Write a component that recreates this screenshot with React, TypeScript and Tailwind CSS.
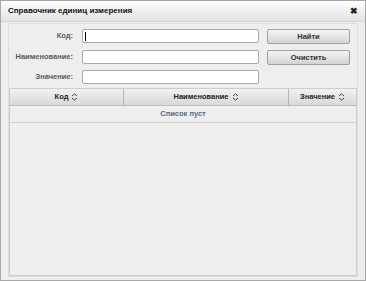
function SortIcon() {
  return (
    <svg width="7" height="8" viewBox="0 0 7 8" className="ml-[3px] inline-block">
      <path d="M1 3 L3.5 0.8 L6 3" fill="none" stroke="#444" strokeWidth="1" />
      <path d="M1 5 L3.5 7.2 L6 5" fill="none" stroke="#444" strokeWidth="1" />
    </svg>
  );
}

function Field({ label, cursor }: { label: string; cursor?: boolean }) {
  return (
    <div className="flex items-center h-[14px]">
      <div className="w-[64px] text-right text-[7.5px] font-bold text-[#5a5a5a]">{label}</div>
      <div className="ml-[9px] w-[177px] h-[14px] bg-white border border-[#a9a9a9] rounded-[2px] flex items-center pl-[2px]">
        {cursor && <div className="w-px h-[9px] bg-black" />}
      </div>
    </div>
  );
}

function Btn({ children }: { children: string }) {
  return (
    <button className="w-[83px] h-[15px] rounded-[2px] border border-[#a0a0a0] bg-gradient-to-b from-[#f4f4f4] to-[#d4d4d4] text-[7.5px] font-bold text-[#333] flex items-center justify-center">
      {children}
    </button>
  );
}

export default function App() {
  return (
    <div className="w-[366px] h-[281px] bg-[#a8a8a8] p-px font-['Liberation_Sans',Arial,sans-serif]">
      <div className="w-full h-full flex flex-col bg-[#eeeeee]">
        <div className="h-[21px] shrink-0 flex items-center justify-between px-[7px] bg-gradient-to-b from-[#ffffff] to-[#e2e2e2] border-b border-[#d4d4d4]">
          <span className="text-[8px] font-bold text-[#111]">Справочник единиц измерения</span>
          <span className="text-[9px] font-bold text-[#222] leading-none">✖</span>
        </div>
        <div className="flex-1 px-[7px] pt-[1px] pb-[3px] flex">
          <div className="flex-1 border border-[#dcdcdc] flex flex-col">
            <div className="flex pt-[5px] pb-[4px]">
              <div className="flex flex-col gap-[6.5px]">
                <Field label="Код:" cursor />
                <Field label="Наименование:" />
                <Field label="Значение:" />
              </div>
              <div className="ml-[8px] flex flex-col gap-[6px]">
                <Btn>Найти</Btn>
                <Btn>Очистить</Btn>
              </div>
            </div>
            <div className="flex-1 border border-[#cfcfcf] flex flex-col">
              <div className="h-[17px] flex bg-gradient-to-b from-[#f2f2f2] to-[#d9d9d9] border-b border-[#bdbdbd] text-[7.5px] font-bold text-[#222]">
                <div className="w-[114px] flex items-center justify-center border-r border-[#b5b5b5]">Код<SortIcon /></div>
                <div className="w-[165px] flex items-center justify-center border-r border-[#b5b5b5]">Наименование<SortIcon /></div>
                <div className="flex-1 flex items-center justify-center">Значение<SortIcon /></div>
              </div>
              <div className="h-[17px] flex items-center justify-center border-b border-[#cfcfcf] text-[7.5px] font-bold text-[#5b6a7a]">
                Список пуст
              </div>
              <div className="flex-1" />
            </div>
          </div>
        </div>
      </div>
    </div>
  );
}
